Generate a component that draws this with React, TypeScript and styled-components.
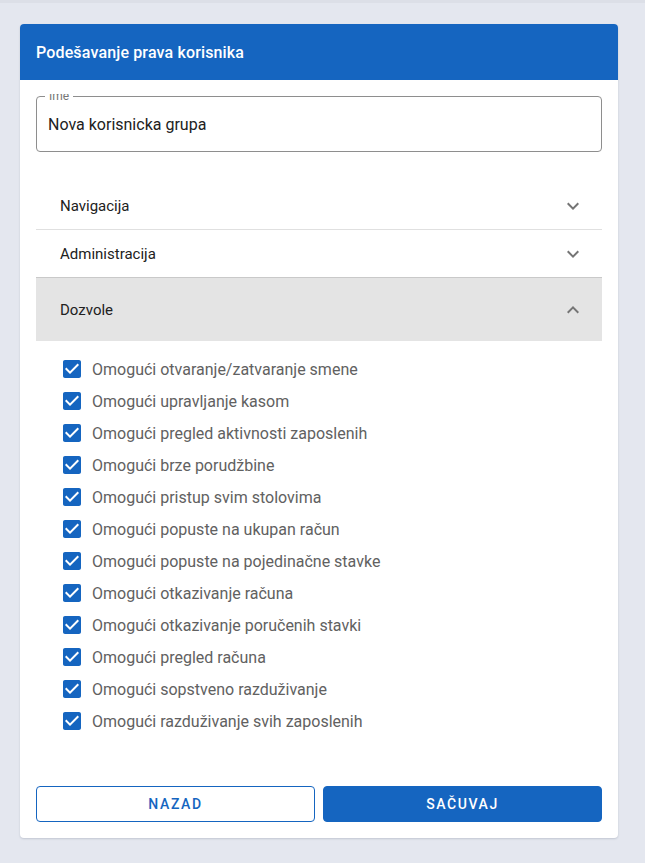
import React from "react";
import styled, { createGlobalStyle } from "styled-components";

const GlobalStyle = createGlobalStyle`
  html, body {
    margin: 0;
    padding: 0;
    background: #e4e7ef;
    font-family: Roboto, "Liberation Sans", Arial, sans-serif;
  }
  * { box-sizing: border-box; }
`;

const BLUE = "#1565c0";

const permissions = [
  "Omogući otvaranje/zatvaranje smene",
  "Omogući upravljanje kasom",
  "Omogući pregled aktivnosti zaposlenih",
  "Omogući brze porudžbine",
  "Omogući pristup svim stolovima",
  "Omogući popuste na ukupan račun",
  "Omogući popuste na pojedinačne stavke",
  "Omogući otkazivanje računa",
  "Omogući otkazivanje poručenih stavki",
  "Omogući pregled računa",
  "Omogući sopstveno razduživanje",
  "Omogući razduživanje svih zaposlenih",
];

const Page = styled.div`
  min-height: 863px;
  border-top: 3px solid #dcdfe7;
  padding: 21px 0 0 20px;
`;

const Card = styled.div`
  width: 598px;
  background: #fff;
  border-radius: 4px;
  overflow: hidden;
  box-shadow: 0 1px 2px rgba(40, 50, 80, 0.18);
`;

const Header = styled.div`
  height: 56px;
  background: ${BLUE};
  color: #fff;
  display: flex;
  align-items: center;
  padding: 0 16px;
  font-size: 16px;
  font-weight: 500;
  letter-spacing: 0.15px;
`;

/* the field label sits half outside this clipped area, as in the source */
const Content = styled.div`
  margin-top: 14px;
  padding: 0 16px 16px;
  overflow: hidden;
`;

const Field = styled.div`
  position: relative;
  margin-top: 2px;
  height: 56px;
  border: 1px solid #8e8e8e;
  border-radius: 4px;
  display: flex;
  align-items: center;
  padding: 0 11px;
  font-size: 16px;
  color: #212121;
`;

const FieldLabel = styled.span`
  position: absolute;
  left: 8px;
  top: -8px;
  padding: 0 4px;
  background: #fff;
  font-size: 12px;
  line-height: 14px;
  color: #757575;
`;

const Accordion = styled.div`
  margin-top: 30px;
`;

const Summary = styled.div<{ $expanded?: boolean; $last?: boolean }>`
  height: ${(p) => (p.$expanded ? "63px" : "48px")};
  display: flex;
  align-items: center;
  justify-content: space-between;
  padding: 0 17px 0 24px;
  font-size: 15px;
  color: #212121;
  background: ${(p) => (p.$expanded ? "#e4e4e4" : "#fff")};
  border-bottom: ${(p) => (p.$last ? "none" : "1px solid #e0e0e0")};
`;

const SummaryDark = styled(Summary)`
  border-bottom: 1px solid #c9c9c9;
`;

const Details = styled.div`
  padding: 12px 0 0 24px;
  display: flex;
  flex-direction: column;
`;

const CheckRow = styled.label`
  height: 32px;
  display: flex;
  align-items: center;
  gap: 8px;
  font-size: 16px;
  color: #616161;
`;

const Actions = styled.div`
  margin-top: 49px;
  display: flex;
  gap: 8px;
`;

const Button = styled.button<{ $primary?: boolean }>`
  flex: 1;
  height: 36px;
  border-radius: 4px;
  border: 1px solid ${BLUE};
  background: ${(p) => (p.$primary ? BLUE : "#fff")};
  color: ${(p) => (p.$primary ? "#fff" : BLUE)};
  font-family: Roboto, "Liberation Sans", Arial, sans-serif;
  font-size: 14px;
  font-weight: 500;
  letter-spacing: 1.6px;
  text-transform: uppercase;
  cursor: pointer;
`;

const Chevron = ({ up }: { up?: boolean }) => (
  <svg width="24" height="24" viewBox="0 0 24 24" fill="#757575">
    {up ? (
      <path d="M12 8l-6 6 1.41 1.41L12 10.83l4.59 4.58L18 14z" />
    ) : (
      <path d="M16.59 8.59 12 13.17 7.41 8.59 6 10l6 6 6-6z" />
    )}
  </svg>
);

const CheckIcon = () => (
  <svg width="24" height="24" viewBox="0 0 24 24" fill={BLUE}>
    <path d="M19 3H5c-1.11 0-2 .9-2 2v14c0 1.1.89 2 2 2h14c1.11 0 2-.9 2-2V5c0-1.1-.89-2-2-2zm-9 14l-5-5 1.41-1.41L10 14.17l7.59-7.59L19 8l-9 9z" />
  </svg>
);

function App() {
  return (
    <>
      <GlobalStyle />
      <Page>
        <Card>
          <Header>Podešavanje prava korisnika</Header>
          <Content>
            <Field>
              <FieldLabel>Ime</FieldLabel>
              Nova korisnicka grupa
            </Field>
            <Accordion>
              <Summary>
                Navigacija
                <Chevron />
              </Summary>
              <SummaryDark>
                Administracija
                <Chevron />
              </SummaryDark>
              <Summary $expanded $last>
                Dozvole
                <Chevron up />
              </Summary>
              <Details>
                {permissions.map((p) => (
                  <CheckRow key={p}>
                    <CheckIcon />
                    {p}
                  </CheckRow>
                ))}
              </Details>
            </Accordion>
            <Actions>
              <Button>Nazad</Button>
              <Button $primary>Sačuvaj</Button>
            </Actions>
          </Content>
        </Card>
      </Page>
    </>
  );
}

export default App;
